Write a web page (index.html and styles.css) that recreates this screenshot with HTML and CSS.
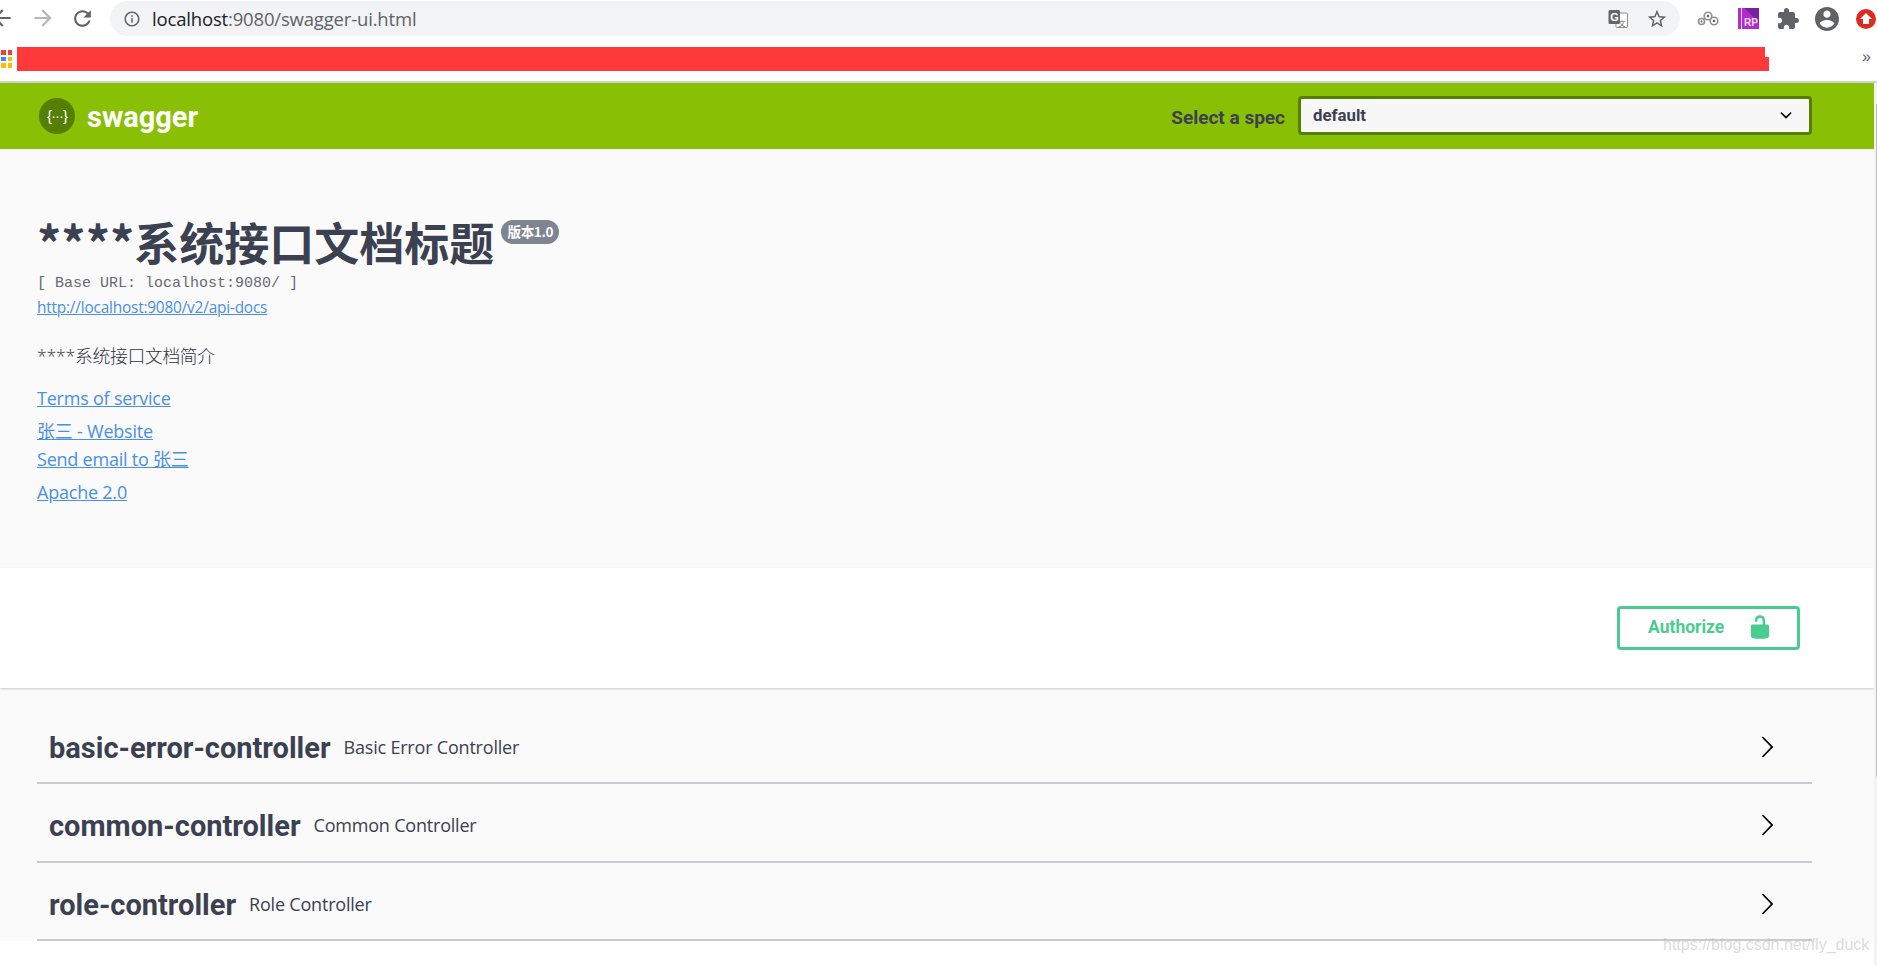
FILE: index.html
```html
<!DOCTYPE html>
<html lang="zh">
<head>
<meta charset="utf-8">
<title>Swagger UI</title>
<link rel="stylesheet" href="styles.css">
</head>
<body>
<div class="toolbar">
  <svg class="nav-back" viewBox="0 0 24 24" width="26" height="26"><path d="M20 11H7.83l5.59-5.59L12 4l-8 8 8 8 1.41-1.41L7.83 13H20z"/></svg>
  <svg class="nav-forward" viewBox="0 0 24 24" width="26" height="26"><path d="M12 4l-1.41 1.41L16.17 11H4v2h12.17l-5.58 5.59L12 20l8-8z"/></svg>
  <svg class="nav-reload" viewBox="0 0 24 24" width="25" height="25"><path d="M17.65 6.35C16.2 4.9 14.21 4 12 4c-4.42 0-7.99 3.58-7.99 8s3.57 8 7.99 8c3.73 0 6.84-2.55 7.73-6h-2.08c-.82 2.33-3.04 4-5.65 4-3.31 0-6-2.69-6-6s2.69-6 6-6c1.66 0 3.14.69 4.22 1.78L13 11h7V4l-2.35 2.35z"/></svg>
  <div class="omnibox">
    <svg class="site-info" viewBox="0 0 24 24" width="18" height="18"><path d="M11 7h2v2h-2zm0 4h2v6h-2zm1-9C6.48 2 2 6.48 2 12s4.48 10 10 10 10-4.48 10-10S17.52 2 12 2zm0 18c-4.41 0-8-3.59-8-8s3.59-8 8-8 8 3.59 8 8-3.59 8-8 8z"/></svg>
    <span class="url"><span class="url-host">localhost</span>:9080/swagger-ui.html</span>
    <svg class="translate" viewBox="0 0 20 20" width="20" height="20"><rect x="8" y="4" width="11.5" height="14.5" rx="1" fill="#fff" stroke="#8a8d91"/><rect x="0.5" y="1" width="11.5" height="14" rx="1.5" fill="#63666a"/><text x="2.2" y="12" class="translate-g">G</text><text x="10.5" y="16.5" class="translate-w">文</text></svg>
    <svg class="star" viewBox="0 0 24 24" width="22" height="22"><path d="M22 9.24l-7.19-.62L12 2 9.19 8.63 2 9.24l5.46 4.73L5.82 21 12 17.27 18.18 21l-1.63-7.03L22 9.24zM12 15.4l-3.76 2.27 1-4.28-3.32-2.88 4.38-.38L12 6.1l1.71 4.04 4.38.38-3.32 2.88 1 4.28L12 15.4z"/></svg>
  </div>
  <svg class="gears" viewBox="0 0 22 16" width="22" height="16"><g fill="none" stroke="#8b8e92" stroke-width="1.6"><circle cx="4.5" cy="10.5" r="3"/><circle cx="11" cy="5" r="3.8"/><circle cx="17" cy="10" r="3.8"/></g><g fill="#5f6368"><circle cx="4.5" cy="10.5" r="1"/><circle cx="11" cy="5" r="1.3"/><circle cx="17" cy="10" r="1.3"/></g></svg>
  <svg class="rp" viewBox="0 0 21 21" width="21" height="21"><rect width="21" height="21" fill="#b02ccb"/><path d="M6 0h15v14z" fill="#7a1fa2"/><rect x="3" width="1" height="21" fill="#eccdf4"/><text x="6" y="18" class="rp-text">RP</text></svg>
  <svg class="puzzle" viewBox="0 0 24 24" width="24" height="24"><path d="M20.5 11H19V7c0-1.1-.9-2-2-2h-4V3.5C13 2.12 11.88 1 10.5 1S8 2.12 8 3.5V5H4c-1.1 0-1.99.9-1.99 2v3.8H3.5c1.49 0 2.7 1.21 2.7 2.7s-1.21 2.7-2.7 2.7H2V20c0 1.1.9 2 2 2h3.8v-1.5c0-1.49 1.21-2.7 2.7-2.7 1.49 0 2.7 1.21 2.7 2.7V22H17c1.1 0 2-.9 2-2v-4h1.5c1.38 0 2.5-1.12 2.5-2.5S21.88 11 20.5 11z"/></svg>
  <svg class="avatar" viewBox="2 2 20 20" width="24" height="24"><path d="M12 2C6.48 2 2 6.48 2 12s4.48 10 10 10 10-4.48 10-10S17.52 2 12 2zm0 3c1.66 0 3 1.34 3 3s-1.34 3-3 3-3-1.34-3-3 1.34-3 3-3zm0 14.2c-2.5 0-4.71-1.28-6-3.22.03-1.99 4-3.08 6-3.08 1.99 0 5.97 1.09 6 3.08-1.29 1.94-3.5 3.22-6 3.22z"/></svg>
  <svg class="update" viewBox="0 0 20 20" width="20" height="20"><circle cx="10" cy="10" r="10" fill="#dd2c1f"/><path d="M10 4l6 6h-3v5H7v-5H4z" fill="#fff"/></svg>
</div>
<div class="bookmarks">
  <div class="apps"><i class="r"></i><i class="r"></i><i class="b"></i><i class="o"></i><i class="o"></i><i class="o"></i></div>
  <div class="redact"></div>
  <span class="more">»</span>
</div>
<div class="page">
  <header class="topbar">
    <div class="brand">
      <svg class="logo" viewBox="0 0 36 36" width="36" height="36"><circle cx="18" cy="18" r="18" fill="#547f00"/><text x="18" y="23" class="logo-text">{···}</text></svg>
      <span class="brand-name">swagger</span>
    </div>
    <label class="spec-label">Select a spec</label>
    <div class="spec-select">
      <span>default</span>
      <svg viewBox="0 0 20 20" width="24" height="24"><path d="M13.418 7.859a.695.695 0 01.978 0 .68.68 0 010 .969l-3.908 3.83a.697.697 0 01-.979 0l-3.908-3.83a.68.68 0 010-.969.695.695 0 01.978 0L10 11l3.418-3.141z"/></svg>
    </div>
  </header>
  <section class="info">
    <h1 class="title"><span class="stars">****</span>系统接口文档标题<span class="version">版本1.0</span></h1>
    <div class="base-url">[ Base URL: localhost:9080/ ]</div>
    <a class="link spec-link">http://localhost:9080/v2/api-docs</a>
    <p class="desc">****系统接口文档简介</p>
    <a class="link big terms">Terms of service</a>
    <a class="link big site">张三 - Website</a>
    <a class="link big email">Send email to 张三</a>
    <a class="link big license">Apache 2.0</a>
  </section>
  <section class="scheme">
    <button class="authorize"><span>Authorize</span>
      <svg viewBox="0 0 20 20" width="26" height="26"><path d="M15.8 8H14V5.6C14 2.703 12.665 1 10 1 7.334 1 6 2.703 6 5.6V6h2v-.801C8 3.754 8.797 3 10 3c1.203 0 2 .754 2 2.199V8H4c-.553 0-1 .646-1 1.199V17c0 .549.428 1.139.951 1.307l1.197.387C5.672 18.861 6.55 19 7.1 19h5.8c.549 0 1.428-.139 1.951-.307l1.196-.387c.524-.167.953-.757.953-1.306V9.199C17 8.646 16.352 8 15.8 8z"/></svg>
    </button>
  </section>
  <section class="tags">
    <div class="tag"><h3>basic-error-controller</h3><small>Basic Error Controller</small>
      <svg viewBox="0 0 20 20" width="24" height="24"><path d="M13.25 10L6.109 2.58a.697.697 0 010-.979.68.68 0 01.969 0l7.83 7.908a.697.697 0 010 .979l-7.83 7.908a.68.68 0 01-.969 0 .697.697 0 010-.979L13.25 10z"/></svg></div>
    <div class="tag"><h3>common-controller</h3><small>Common Controller</small>
      <svg viewBox="0 0 20 20" width="24" height="24"><path d="M13.25 10L6.109 2.58a.697.697 0 010-.979.68.68 0 01.969 0l7.83 7.908a.697.697 0 010 .979l-7.83 7.908a.68.68 0 01-.969 0 .697.697 0 010-.979L13.25 10z"/></svg></div>
    <div class="tag"><h3>role-controller</h3><small>Role Controller</small>
      <svg viewBox="0 0 20 20" width="24" height="24"><path d="M13.25 10L6.109 2.58a.697.697 0 010-.979.68.68 0 01.969 0l7.83 7.908a.697.697 0 010 .979l-7.83 7.908a.68.68 0 01-.969 0 .697.697 0 010-.979L13.25 10z"/></svg></div>
  </section>
</div>
<div class="scrollbar"><div class="thumb"></div></div>
<div class="watermark">https://blog.csdn.net/fly_duck</div>
</body>
</html>
```
FILE: styles.css
```css
* { box-sizing: border-box; }
html, body { margin: 0; padding: 0; height: 965px; overflow: hidden; background: #fff; }
body { font-family: "Open Sans", "Noto Sans CJK SC", sans-serif; color: #3b4151; position: relative; }

.toolbar { height: 41px; display: flex; align-items: center; }
.toolbar svg { fill: #5f6368; flex: none; }
.nav-back { margin-left: -11px; margin-top: -5px; }
.nav-forward { margin-left: 15px; margin-top: -5px; fill: #b5b7ba !important; }
.nav-reload { margin-left: 14px; margin-top: -5px; }
.omnibox { flex: none; width: 1570px; height: 35px; margin: -4px 0 0 15px; background: #f1f3f4; border-radius: 18px; display: flex; align-items: center; padding-left: 13px; }
.site-info { margin-right: 11px; }
.url { font-size: 18.5px; color: #5f6368; letter-spacing: -0.17px; margin-top: -1px; }
.url-host { color: #202124; }
.translate { margin-left: auto; margin-right: 18px; }
.translate-g { font: bold 11px "Liberation Sans", sans-serif; fill: #fff; }
.translate-w { font: 7px "Noto Sans CJK SC", sans-serif; fill: #63666a; }
.star { margin-right: 12px; }
.gears { margin-left: 17px; margin-top: -4px; }
.rp { margin-left: 19px; margin-top: -4px; }
.rp-text { font: bold 10px "Liberation Sans", sans-serif; fill: #f3dcf8; }
.puzzle { margin-left: 17px; margin-top: -3px; }
.avatar { margin-left: 15px; margin-top: -3px; }
.update { margin-left: 17px; margin-top: -3px; }

.bookmarks { height: 42px; display: flex; align-items: flex-start; border-bottom: 2px solid #cfd1d3; }
.apps { margin: 9px 0 0 1px; width: 11px; flex: none; display: grid; grid-template-columns: 4.5px 4.5px; gap: 2px; }
.apps i { height: 4.5px; display: block; }
.apps .r { background: #ea4335; }
.apps .b { background: #4285f4; }
.apps .o { background: #fbbc04; }
.redact { flex: none; width: 1752px; height: 24px; margin: 6px 0 0 5px; background: #ff3939; clip-path: polygon(0 0, 1748px 0, 1748px 10px, 1752px 10px, 1752px 24px, 0 24px); }
.more { margin: 7px 0 0 93px; font: 16px "Liberation Sans", sans-serif; color: #5f6368; }

.page { width: 1874px; background: #fafafa; }

.topbar { height: 66px; background: #89bf04; display: flex; align-items: center; padding: 0 62px 0 39px; }
.brand { display: flex; align-items: center; margin-right: auto; }
.logo-text { font: 400 15px "Liberation Sans", sans-serif; letter-spacing: -1px; fill: #fff; text-anchor: middle; }
.brand-name { margin: 2px 0 0 12px; font-family: Roboto, sans-serif; font-size: 29px; font-weight: 700; color: #fff; line-height: 1; }
.spec-label { font-family: Roboto, sans-serif; font-size: 19px; font-weight: 700; color: #3b4151; margin-right: 13px; margin-top: 2px; }
.spec-select { width: 514px; height: 39px; background: #f7f7f7; border: 3px solid #547f00; border-radius: 4px; display: flex; align-items: center; justify-content: space-between; padding: 0 11px 0 12px; font-family: Roboto, sans-serif; font-size: 16.8px; font-weight: 700; margin-top: -2px; }
.spec-select svg { fill: #111; }

.info { height: 419px; padding: 70px 0 0 37px; display: flex; flex-direction: column; align-items: flex-start; }
.title { margin: 0; font-size: 45px; line-height: 46px; font-weight: 700; color: #3b4151; font-family: "Noto Sans CJK SC", sans-serif; display: flex; align-items: flex-start; }
.stars { font-size: 48px; margin-top: -1px; }
.version { background: #7d8492; color: #fff; font-size: 13.5px; line-height: 22px; height: 24px; width: 58px; text-align: center; border-radius: 12px; margin: 1px 0 0 7px; font-weight: 700; letter-spacing: -0.3px; }
.base-url { font: 15px/20px "Liberation Mono", monospace; color: #666a74; margin-top: 9px; }
.link { color: #4990e2; text-decoration: underline; display: block; }
.spec-link { font-size: 15.4px; line-height: 20px; margin-top: 4px; letter-spacing: -0.2px; }
.desc { margin: 25px 0 0; font-size: 17.8px; line-height: 26px; color: #2f3440; font-weight: 300; letter-spacing: -0.3px; }
.big { font-size: 18px; line-height: 24px; letter-spacing: -0.22px; font-weight: 400; }
.terms { margin-top: 17px; }
.site { margin-top: 9px; }
.email { margin-top: 4px; }
.license { margin-top: 9px; }

.scheme { height: 120px; background: #fff; box-shadow: 0 1px 2px rgba(0,0,0,.2); display: flex; justify-content: flex-end; align-items: flex-start; padding: 38px 74px 0 0; position: relative; }
.authorize { width: 183px; height: 44px; background: transparent; border: 3px solid #49cc90; border-radius: 4px; color: #49cc90; font-family: Roboto, sans-serif; font-size: 17.5px; font-weight: 700; display: flex; align-items: center; justify-content: space-between; padding: 0 24px 3px 28px; }
.authorize svg { fill: #49cc90; }

.tags { padding: 18px 62px 0 37px; }
.tag { height: 78.5px; display: flex; align-items: center; border-bottom: 2px solid #c9cbcf; padding: 6px 33px 0 12px; }
.tag h3 { margin: 2px 13px 0 0; font-family: Roboto, sans-serif; font-size: 29px; font-weight: 700; color: #3b4151; line-height: 36px; }
.tag small { font-size: 18px; font-weight: 400; letter-spacing: -0.2px; color: #3b4151; }
.tag svg { margin-left: auto; fill: #000; }
.tag:first-child { height: 78px; }

.scrollbar { position: absolute; left: 1874px; top: 83px; width: 3px; height: 882px; background: #f3f3f3; }
.thumb { width: 1.5px; height: 673px; margin: 21px 0 0 1.5px; background: #bdbdbd; }

.watermark { position: absolute; left: 1663px; top: 936px; font: 16px "Liberation Sans", sans-serif; color: rgba(190,190,190,.55); white-space: nowrap; }
```
